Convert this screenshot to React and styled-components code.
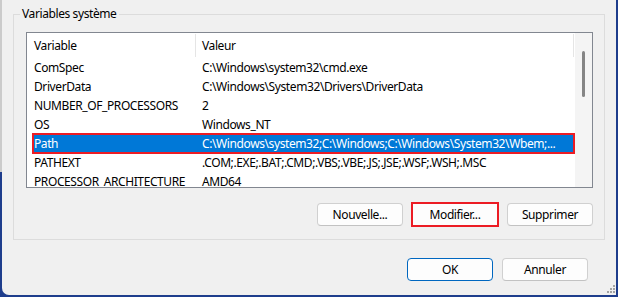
import React from "react";
import styled, { createGlobalStyle } from "styled-components";

const GlobalStyle = createGlobalStyle`
  html, body {
    margin: 0;
    padding: 0;
  }
  body {
    width: 618px;
    height: 297px;
    overflow: hidden;
    font-family: "Segoe UI", "Noto Sans", sans-serif;
    font-size: 12px;
    letter-spacing: -0.4px;
    color: #000;
  }
`;

const variables = [
  { name: "ComSpec", value: "C:\\Windows\\system32\\cmd.exe" },
  { name: "DriverData", value: "C:\\Windows\\System32\\Drivers\\DriverData" },
  { name: "NUMBER_OF_PROCESSORS", value: "2" },
  { name: "OS", value: "Windows_NT" },
  {
    name: "Path",
    value: "C:\\Windows\\system32;C:\\Windows;C:\\Windows\\System32\\Wbem;...",
    selected: true,
  },
  { name: "PATHEXT", value: ".COM;.EXE;.BAT;.CMD;.VBS;.VBE;.JS;.JSE;.WSF;.WSH;.MSC" },
  { name: "PROCESSOR_ARCHITECTURE", value: "AMD64" },
];

const App = () => {
  return (
    <>
      <GlobalStyle />
      <Desktop>
        <Window>
          <GroupBox>
            <Legend>Variables système</Legend>
            <GroupBody>
              <ListView>
                <ListMain>
                  <Header>
                    <HeaderCell $width={169} $pad={7}>
                      Variable
                    </HeaderCell>
                    <HeaderCell $width={378} $pad={6}>
                      Valeur
                    </HeaderCell>
                  </Header>
                  {variables.map((v) => (
                    <Row key={v.name} $selected={v.selected}>
                      <NameCell>{v.name}</NameCell>
                      <ValueCell>{v.value}</ValueCell>
                    </Row>
                  ))}
                </ListMain>
                <ScrollBar>
                  <Thumb />
                </ScrollBar>
              </ListView>
              <ButtonRow>
                <Button>Nouvelle...</Button>
                <Button $marked>Modifier...</Button>
                <Button>Supprimer</Button>
              </ButtonRow>
            </GroupBody>
          </GroupBox>
          <DialogButtons>
            <Button $default>OK</Button>
            <Button>Annuler</Button>
          </DialogButtons>
          <Grip width="10" height="10" viewBox="0 0 10 10">
            <rect x="7" y="1" width="2" height="2" fill="#a3a3a3" />
            <rect x="4" y="4" width="2" height="2" fill="#a3a3a3" />
            <rect x="7" y="4" width="2" height="2" fill="#a3a3a3" />
            <rect x="1" y="7" width="2" height="2" fill="#a3a3a3" />
            <rect x="4" y="7" width="2" height="2" fill="#a3a3a3" />
            <rect x="7" y="7" width="2" height="2" fill="#a3a3a3" />
          </Grip>
        </Window>
      </Desktop>
    </>
  );
};

export default App;

const Desktop = styled.div`
  width: 618px;
  height: 297px;
  box-sizing: border-box;
  padding: 0 2px 2px 2px;
  background: linear-gradient(#cbcbcb, #cbcbcb) left top / 2px 172px no-repeat,
    #1e3d8c;
`;

const Window = styled.div`
  position: relative;
  height: 295px;
  box-sizing: border-box;
  padding: 0 11px;
  background: #f0f0f0;
  border-bottom-left-radius: 7px;
  display: flex;
  flex-direction: column;
`;

const GroupBox = styled.fieldset`
  margin: 6px 0 0 0;
  padding: 0;
  min-width: 0;
  border: 1px solid #dcdcdc;
`;

const Legend = styled.legend`
  margin-left: 6px;
  padding: 0 2px;
  line-height: 16px;
`;

const GroupBody = styled.div`
  padding: 10px 11px 13px 12px;
  display: flex;
  flex-direction: column;
`;

const ListView = styled.div`
  height: 156px;
  box-sizing: border-box;
  border: 1px solid #828790;
  background: #fff;
  display: flex;
`;

const ListMain = styled.div`
  flex: 1;
  display: flex;
  flex-direction: column;
  overflow: hidden;
`;

const Header = styled.div`
  height: 25px;
  flex-shrink: 0;
  display: flex;
  align-items: center;
`;

const HeaderCell = styled.div`
  width: ${(p) => p.$width}px;
  height: 23px;
  box-sizing: border-box;
  padding-left: ${(p) => p.$pad}px;
  border-right: 1px solid #e5e5e5;
  display: flex;
  align-items: center;
  white-space: nowrap;
`;

const Row = styled.div`
  height: 19px;
  flex-shrink: 0;
  margin: 0 1px 0 6px;
  display: flex;
  align-items: center;
  white-space: nowrap;
  background: ${(p) => (p.$selected ? "#0078d7" : "transparent")};
  color: ${(p) => (p.$selected ? "#fff" : "#000")};
  box-shadow: ${(p) =>
    p.$selected ? "inset 0 0 0 1px #ec1c24, 0 0 0 1px #ec1c24" : "none"};
`;

const NameCell = styled.div`
  width: 163px;
  flex-shrink: 0;
  box-sizing: border-box;
  padding-left: 1px;
`;

const ValueCell = styled.div`
  flex: 1;
  padding-left: 6px;
  overflow: hidden;
`;

const ScrollBar = styled.div`
  width: 17px;
  flex-shrink: 0;
  background: #f4f4f4;
`;

const Thumb = styled.div`
  width: 3px;
  height: 46px;
  margin: 18px 0 0 7px;
  border-radius: 2px;
  background: #858585;
`;

const ButtonRow = styled.div`
  margin-top: 15px;
  display: flex;
  justify-content: flex-end;
  gap: 9px;
`;

const DialogButtons = styled.div`
  margin: 18px 17px 0 0;
  display: flex;
  justify-content: flex-end;
  gap: 9px;
`;

const Button = styled.button`
  width: 86px;
  height: 23px;
  box-sizing: border-box;
  padding: 0;
  font-family: inherit;
  font-size: 12px;
  letter-spacing: inherit;
  color: #000;
  background: #fdfdfd;
  border: 1px solid
    ${(p) => (p.$marked ? "#ec1c24" : p.$default ? "#0067c0" : "#d0d0d0")};
  border-bottom-color: ${(p) =>
    p.$marked ? "#ec1c24" : p.$default ? "#0067c0" : "#c2c2c2"};
  border-radius: ${(p) => (p.$marked ? "0" : "4px")};
  box-shadow: ${(p) => (p.$marked ? "0 0 0 1px #ec1c24" : "none")};
`;

const Grip = styled.svg`
  position: absolute;
  right: 0;
  bottom: 1px;
`;
